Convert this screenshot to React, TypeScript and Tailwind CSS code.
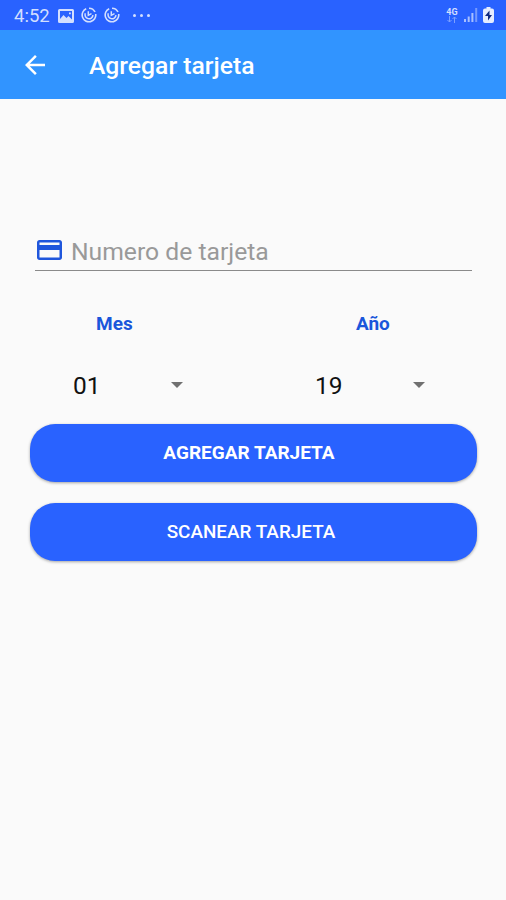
import type { ReactNode } from "react";

const SyncIcon = () => (
  <svg viewBox="0 0 16 16" className="h-4 w-4" fill="none" stroke="currentColor">
    <path d="M5.2 1.8A6.8 6.8 0 1 0 14.7 7" strokeWidth="1.6" />
    <path d="M8 1.2A6.8 6.8 0 0 1 14 5" strokeWidth="1.6" />
    <path d="M4.3 6.3A4 4 0 1 0 12 8.2" strokeWidth="1.5" />
    <path d="M7.3 4.3v4l3.2-1.6" strokeWidth="1.5" />
  </svg>
);

const StatusBar = () => (
  <div className="flex h-[30px] items-center bg-[#2962ff] pr-[12px] pl-[14px] text-[#d3dfff]">
    <span className="w-[44px] pt-px text-[18.5px] leading-[30px] whitespace-nowrap">4:52</span>
    <svg viewBox="0 0 16 14" className="mt-px h-[14px] w-4">
      <path
        fill="currentColor"
        fillRule="evenodd"
        d="M1.5 0h13A1.5 1.5 0 0 1 16 1.5v11a1.5 1.5 0 0 1-1.5 1.5h-13A1.5 1.5 0 0 1 0 12.5v-11A1.5 1.5 0 0 1 1.5 0zM2 2v8l3.500-4 3 3L10.5 7 14 10.5V2zM11 3.5h1.800v1.800H11z"
      />
    </svg>
    <div className="ml-[7px] flex gap-[7px]">
      <SyncIcon />
      <SyncIcon />
    </div>
    <div className="ml-[13px] flex gap-[4px]">
      <span className="h-[3px] w-[3px] rounded-full bg-[#d3dfff]" />
      <span className="h-[3px] w-[3px] rounded-full bg-[#d3dfff]" />
      <span className="h-[3px] w-[3px] rounded-full bg-[#d3dfff]" />
    </div>
    <div className="ml-auto flex items-center">
      <div className="flex w-[12px] flex-col items-center">
        <span className="text-[9px] leading-[8px] font-bold">4G</span>
        <svg viewBox="0 0 10 7" className="h-[7px] w-[10px] opacity-50" fill="none" stroke="currentColor">
          <path d="M2.5 0v6M.5 4l2 2 2-2M7.5 7V1M5.5 3l2-2 2 2" />
        </svg>
      </div>
      <svg viewBox="0 0 14 14" className="ml-[6px] h-[14px] w-[14px]" fill="currentColor">
        <path d="M0 11h2v3H0zM3.700 8.500h2V14h-2zM7.400 5h2v9h-2z" opacity=".75" />
        <path d="M11.200 0h2v14h-2z" opacity=".45" />
      </svg>
      <svg viewBox="0 0 11 16" className="ml-[5px] h-4 w-[11px]">
        <path fill="#e6edff" d="M3.500 0h4v1.500H9a2 2 0 0 1 2 2V14a2 2 0 0 1-2 2H2a2 2 0 0 1-2-2V3.500a2 2 0 0 1 2-2h1.500z" />
        <path fill="#102a80" d="M6.500 3.500 2 9h3v4.500L9 8H6.500z" />
      </svg>
    </div>
  </div>
);

const AppBar = () => (
  <header className="flex h-[69px] items-center bg-[#3194ff] pl-[25px] text-white">
    <button type="button" aria-label="Volver" className="w-[64px]">
      <svg viewBox="4 4 16 16" className="h-5 w-5" fill="currentColor">
        <path d="M20 11H7.830l5.590-5.590L12 4l-8 8 8 8 1.410-1.410L7.830 13H20v-2z" />
      </svg>
    </button>
    <h1 className="pt-[3px] text-[24.7px] font-medium whitespace-nowrap">Agregar tarjeta</h1>
  </header>
);

type SpinnerProps = { label: string; value: string; labelClass: string };

const Spinner = ({ label, value, labelClass }: SpinnerProps) => (
  <div className="w-[242px] shrink-0">
    <div className={`text-[19px] leading-6 font-bold text-[#1a56db] ${labelClass}`}>{label}</div>
    <div className="mt-[33px] flex h-8 items-center pl-[38px]">
      <span className="w-[98px] pt-[2px] text-[24.5px] leading-8 text-[#111]">{value}</span>
      <svg viewBox="0 0 12 6" className="h-[6px] w-[12px]" fill="#707070">
        <path d="M0 0h12L6 6z" />
      </svg>
    </div>
  </div>
);

const ActionButton = ({ children, className }: { children: ReactNode; className: string }) => (
  <button
    type="button"
    className={`h-[58px] w-full rounded-[25px] bg-[#2962ff] text-white shadow-[0_1px_3px_rgba(0,0,0,0.35)] ${className}`}
  >
    {children}
  </button>
);

const App = () => {
  return (
    <div className="h-[900px] w-[506px] overflow-hidden bg-[#fafafa] font-[Roboto,sans-serif]">
      <StatusBar />
      <AppBar />

      <main className="pt-[132px]">
        {/* Card number */}
        <div className="mr-[34px] ml-[35px] flex h-[40px] items-center border-b-[1.5px] border-[#8a8a8a] pl-[2px]">
          <svg viewBox="2 4 20 16" className="-mt-px h-5 w-[25px]" fill="#1f56dc">
            <path d="M20 4H4c-1.110 0-1.990.890-1.990 2L2 18c0 1.110.890 2 2 2h16c1.110 0 2-.890 2-2V6c0-1.110-.890-2-2-2zm0 14H4v-6h16v6zm0-10H4V6h16v2z" />
          </svg>
          <input
            type="text"
            placeholder="Numero de tarjeta"
            className="ml-[9px] min-w-0 flex-1 bg-transparent pt-[3px] text-[24.7px] outline-none placeholder:text-[#999]"
          />
        </div>

        {/* Expiry date */}
        <div className="mt-[41px] flex pl-[35px]">
          <Spinner label="Mes" value="01" labelClass="pl-[61px]" />
          <Spinner label="Año" value="19" labelClass="pl-[79px]" />
        </div>

        <div className="mt-[23px] flex flex-col gap-[21px] pr-[29px] pl-[30px]">
          <ActionButton className="pr-[9px] text-[19px] font-bold">AGREGAR TARJETA</ActionButton>
          <ActionButton className="pr-[5px] text-[18.9px] font-medium">SCANEAR TARJETA</ActionButton>
        </div>
      </main>
    </div>
  );
};

export default App;
